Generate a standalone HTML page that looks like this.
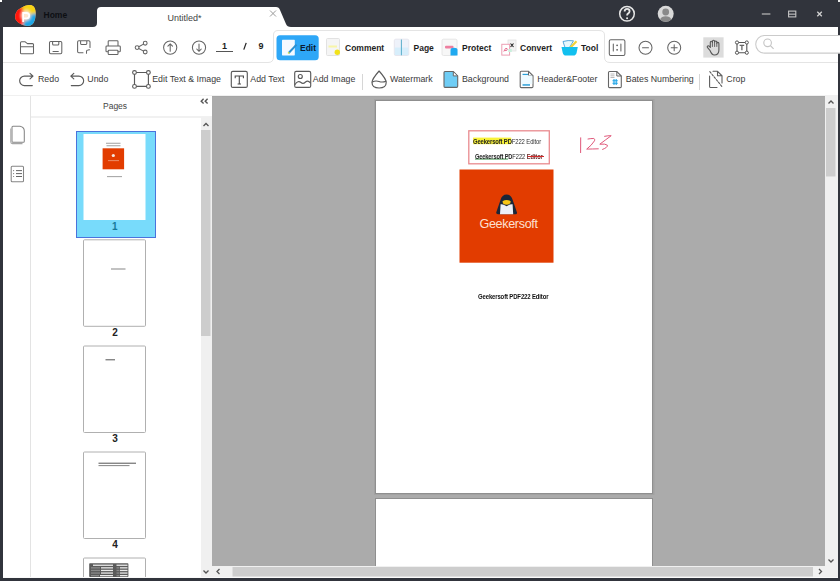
<!DOCTYPE html>
<html><head><meta charset="utf-8">
<style>
*{margin:0;padding:0;box-sizing:border-box}
html,body{width:840px;height:581px;overflow:hidden;background:#31343c;font-family:"Liberation Sans",sans-serif}
.a{position:absolute}
.t{position:absolute;white-space:nowrap;font-size:8.5px;color:#3a3a3a;line-height:10px}
.b{font-weight:bold;color:#1e1e1e}
svg{position:absolute;left:0;top:0}
</style></head><body>
<!-- BACKGROUND SHAPES -->
<svg width="840" height="581">
<rect x="0" y="0" width="840" height="581" fill="#31343c"/>
<rect x="0" y="0" width="2" height="2" fill="#fff"/>
<!-- app white body -->
<rect x="3" y="27" width="835" height="551" fill="#fff"/>
<!-- untitled tab -->
<path d="M93 27 Q97 27 97 23 L97 11 Q97 7 101 7 L276 7 Q279 7 280 10 L286 24 Q287 27 291 27 Z" fill="#fff"/>
<!-- row1 borders -->
<path d="M3 62.5 L268 62.5 Q273.5 62.5 273.5 57 L273.5 35 Q273.5 30.5 278 30.5 L599 30.5 Q604.5 30.5 604.5 35 L604.5 57 Q604.5 62.5 610 62.5 L838 62.5" fill="none" stroke="#e4e4e4" stroke-width="1"/>
<!-- row2 bottom -->
<rect x="3" y="95" width="835" height="1" fill="#f0f0f0"/>
<!-- main gray -->
<rect x="212" y="96" width="613" height="470" fill="#ababab"/>
<rect x="212" y="96" width="613" height="1" fill="#a6a6a6"/>
<!-- left strip separator -->
<rect x="30" y="96" width="1" height="481" fill="#e3e3e3"/>
<!-- pages header line -->
<rect x="31" y="116.5" width="181" height="1" fill="#e3e3e3"/>
<!-- pages scrollbar -->
<rect x="201" y="117.5" width="11" height="460" fill="#f0f0f0"/>
<rect x="201" y="130" width="9.5" height="206" fill="#cdcdcd"/>
<path d="M203.5 126 L206 123.5 L208.5 126" fill="none" stroke="#555" stroke-width="1.3"/>
<path d="M203.5 570.5 L206 573 L208.5 570.5" fill="none" stroke="#555" stroke-width="1.3"/>
<!-- collapse << -->
<path d="M203.6 98.8 L201.2 101.2 L203.6 103.6 M207.6 98.8 L205.2 101.2 L207.6 103.6" fill="none" stroke="#555" stroke-width="1.4"/>
<!-- right v scrollbar -->
<rect x="825" y="96" width="13" height="482" fill="#f0f0f0"/>
<rect x="826" y="108" width="9.5" height="68.5" fill="#cdcdcd"/>
<path d="M828.5 103.5 L831 101 L833.5 103.5" fill="none" stroke="#555" stroke-width="1.3"/>
<path d="M828.5 559.5 L831 562 L833.5 559.5" fill="none" stroke="#555" stroke-width="1.3"/>
<!-- h scrollbar -->
<rect x="212" y="566" width="626" height="11" fill="#f0f0f0"/>
<rect x="232.5" y="567" width="580.5" height="9.5" fill="#cdcdcd"/>
<path d="M219.5 569 L217 571.5 L219.5 574" fill="none" stroke="#555" stroke-width="1.3"/>
<path d="M819 569 L821.5 571.5 L819 574" fill="none" stroke="#555" stroke-width="1.3"/>
<rect x="3" y="577" width="835" height="1" fill="#fafafa"/>
<!-- pages -->
<rect x="374" y="99" width="280.5" height="396" fill="#a2a2a2"/>
<rect x="375" y="100" width="278" height="394" fill="#8f8f8f"/>
<rect x="376" y="101" width="276" height="392" fill="#fff"/>
<rect x="375" y="498" width="278" height="68" fill="#8f8f8f"/>
<rect x="376" y="499" width="276" height="67" fill="#fff"/>
</svg>
<svg width="840" height="581">
<!-- logo -->
<defs>
<radialGradient id="lg" cx="0.45" cy="0.5" r="0.6">
<stop offset="0" stop-color="#ffe9d0"/><stop offset="0.35" stop-color="#ffd9b0"/><stop offset="1" stop-color="#ffd9b0" stop-opacity="0"/>
</radialGradient>
<linearGradient id="lr" x1="0" y1="0" x2="1" y2="0">
<stop offset="0" stop-color="#ff1010"/><stop offset="0.5" stop-color="#ff4030"/><stop offset="1" stop-color="#ff6040" stop-opacity="0"/>
</linearGradient>
</defs>
<clipPath id="lclip"><path d="M15.2 17.5 C15 13 17.5 9.5 21 8 C24.5 5.5 28.5 4.6 31.5 5.2 C34.5 6 35.8 9.5 35.6 14 C35.5 19.5 34 24 30.5 25.6 C27.5 26.6 23 25.5 19.5 23.2 C16.8 21.6 15.3 19.8 15.2 17.5 Z"/></clipPath>
<filter id="lblur" x="-50%" y="-50%" width="200%" height="200%"><feGaussianBlur stdDeviation="1.6"/></filter>
<g clip-path="url(#lclip)">
<rect x="14" y="4" width="23" height="23" fill="#ffb070"/>
<g filter="url(#lblur)">
<path d="M12 4 L26 2 L38 2 L38 15 L27 15 Z" fill="#f6d414"/>
<path d="M27 15 L38 13 L38 28 L22 28 Z" fill="#1aa6e6"/>
<path d="M10 8 L22 6 L24 16 L21 30 L10 30 Z" fill="#ff1208"/>
<ellipse cx="26" cy="15.5" rx="4.5" ry="5" fill="#ffe8d0"/>
</g>
</g>
<path d="M23.2 22 L23.2 13 L26.5 13 Q29.2 13 29.2 15.7 Q29.2 18.4 26.5 18.4 L23.2 18.4" fill="none" stroke="#fff" stroke-width="1.8"/>
<!-- tab close -->
<path d="M270 10.5 L276 16.5 M276 10.5 L270 16.5" stroke="#9a9a9a" stroke-width="1"/>
<!-- help -->
<circle cx="627" cy="13.8" r="7.3" fill="none" stroke="#e6e6e6" stroke-width="1.5"/>
<path d="M624.6 11.6 Q624.6 8.9 627.1 8.9 Q629.6 8.9 629.6 11.3 Q629.6 12.8 628 13.6 Q627.1 14.1 627.1 15.6" fill="none" stroke="#e6e6e6" stroke-width="1.8"/>
<circle cx="627.1" cy="18.2" r="1.05" fill="#e6e6e6"/>
<!-- avatar -->
<circle cx="665.7" cy="13.8" r="8" fill="#d9d9d9"/>
<circle cx="665.7" cy="12" r="3.4" fill="#8a8a8a"/>
<path d="M660 19.5 Q661.5 16.3 665.7 16.3 Q669.9 16.3 671.4 19.5 Q669 21.8 665.7 21.8 Q662.4 21.8 660 19.5 Z" fill="#8a8a8a"/>
<!-- window controls -->
<rect x="761.8" y="13.4" width="8.6" height="1.2" fill="#b9b9b9"/>
<rect x="788.6" y="11.1" width="7.2" height="5.8" fill="none" stroke="#c4c4c4" stroke-width="1.1"/>
<rect x="788.6" y="13.6" width="7.2" height="1.1" fill="#c4c4c4"/>
<path d="M817.3 11.8 L821.8 16.3 M821.8 11.8 L817.3 16.3" stroke="#d0d0d0" stroke-width="1.3"/>
<rect x="838" y="0" width="2" height="2" fill="#e8e8e8"/>

<g fill="none" stroke="#646464" stroke-width="1.05" stroke-linejoin="round" stroke-linecap="round">
<!-- folder -->
<path d="M21.5 41.7 L24.9 41.7 L27.4 43.6 L32.5 43.6 Q33.5 43.6 33.5 44.6 L33.5 52.9 Q33.5 53.8 32.5 53.8 L21.5 53.8 Q20.5 53.8 20.5 52.9 L20.5 42.7 Q20.5 41.7 21.5 41.7 Z M20.5 46.8 L33.5 46.8"/>
<!-- save -->
<rect x="49.5" y="41.5" width="12.3" height="12.3" rx="1.2"/>
<path d="M52.6 41.5 L52.6 44 Q52.6 45 53.6 45 L57.8 45 Q58.8 45 58.8 44 L58.8 41.5 M53 51.5 L58.3 51.5"/>
<!-- save as -->
<path d="M90 47.5 L90 42 Q90 40.8 88.8 40.8 L78.8 40.8 Q77.6 40.8 77.6 42 L77.6 51.6 Q77.6 52.8 78.8 52.8 L83 52.8 M80.6 40.8 L80.6 43.6 Q80.6 44.4 81.4 44.4 L86 44.4 Q86.8 44.4 86.8 43.6 L86.8 40.8 M86.5 53.3 L86.5 51.5 Q86.5 50 88 50 L89.6 49.8"/>
<!-- print -->
<path d="M108.2 45.8 L108.2 41.6 Q108.2 40.8 109 40.8 L117.2 40.8 Q118 40.8 118 41.6 L118 45.8 M108 51.8 L106.8 51.8 Q106 51.8 106 51 L106 46.8 Q106 45.9 106.9 45.9 L119.4 45.9 Q120.3 45.9 120.3 46.8 L120.3 51 Q120.3 51.8 119.4 51.8 L118 51.8"/>
<rect x="108.2" y="50.2" width="9.8" height="4.3" rx="0.8"/>
<!-- share -->
<circle cx="145.2" cy="43.2" r="1.9"/><circle cx="137.1" cy="47.6" r="1.9"/><circle cx="145.2" cy="52" r="1.9"/>
<path d="M138.8 46.7 L143.5 44.1 M138.8 48.5 L143.5 51.1"/>
<!-- up/down -->
<circle cx="170.2" cy="47.6" r="6.6"/>
<path d="M170.2 51.2 L170.2 44 M167.9 46.2 L170.2 43.9 L172.5 46.2"/>
<circle cx="199" cy="47.6" r="6.6"/>
<path d="M199 44 L199 51.2 M196.7 49 L199 51.3 L201.3 49"/>
<!-- right tools -->
<rect x="609.3" y="39.8" width="15.6" height="15.6" rx="1.5"/>
<path d="M613.3 44 L613.3 51 M620.9 44 L620.9 51"/>
<circle cx="645.5" cy="47.8" r="6.5"/>
<path d="M642.5 47.8 L648.5 47.8"/>
<circle cx="674.2" cy="47.8" r="6.5"/>
<path d="M671.2 47.8 L677.2 47.8 M674.2 44.8 L674.2 50.8"/>
</g>
<circle cx="617.1" cy="45.3" r="0.9" fill="#5e5e5e"/><circle cx="617.1" cy="49.8" r="0.9" fill="#5e5e5e"/>
<rect x="703.3" y="37.3" width="20.3" height="20.3" fill="#dcdcdc"/>
<g fill="none" stroke="#555" stroke-width="1.1" stroke-linejoin="round" stroke-linecap="round">
<path d="M710 50.5 L707.6 47.6 Q706.8 46.5 707.8 45.9 Q708.7 45.4 709.5 46.5 L710.3 47.5 L710.3 42.5 Q710.3 41.3 711.4 41.3 Q712.4 41.3 712.4 42.5 L712.4 41.4 Q712.4 40.3 713.5 40.3 Q714.6 40.3 714.6 41.4 L714.6 42 Q714.6 41 715.7 41 Q716.8 41 716.8 42 L716.8 43.3 Q716.8 42.4 717.8 42.4 Q718.9 42.4 718.9 43.5 L718.9 50 Q718.9 55 714.3 55 Q711.8 55 710 50.5 Z"/>
<path d="M712.4 42.5 L712.4 46.5 M714.6 42 L714.6 46.5 M716.8 43.3 L716.8 46.5" stroke-width="0.9"/>
<path d="M737 42.5 L746.8 42.5 M737 52.7 L746.8 52.7 M737 42.5 L737 52.7 M746.8 42.5 L746.8 52.7"/>
</g>
<g fill="#fff" stroke="#555" stroke-width="1"><circle cx="737" cy="42.5" r="1.6"/><circle cx="746.8" cy="42.5" r="1.6"/><circle cx="737" cy="52.7" r="1.6"/><circle cx="746.8" cy="52.7" r="1.6"/></g>
<path d="M739.6 45.3 L744.2 45.3 M741.9 45.3 L741.9 50.3" stroke="#666" stroke-width="1.3"/>
<!-- search -->
<path d="M840 35.5 L764.5 35.5 A8.8 8.8 0 0 0 764.5 53.1 L840 53.1" fill="#fff" stroke="#cbcbcb" stroke-width="1.1"/>
<circle cx="767.6" cy="42.8" r="3.8" fill="none" stroke="#c4c4c4" stroke-width="1.1"/>
<path d="M770.4 45.6 L773.6 48.8" stroke="#c4c4c4" stroke-width="1.2"/>

<!-- Edit button -->
<rect x="276.5" y="35.3" width="42.2" height="25" rx="3.5" fill="#2ea7f7"/>
<rect x="282" y="39.8" width="12.8" height="15.6" rx="0.6" fill="#f4f9ff"/>
<path d="M288.7 53 L296.5 44.6" stroke="#2a8fd0" stroke-width="2"/>
<path d="M288.2 53.6 L289.2 52.3" stroke="#d5e04a" stroke-width="1.6"/>
<!-- Comment icon -->
<rect x="326.5" y="38.5" width="13" height="17" rx="1" fill="#f5f5f5" stroke="#e2e2e2" stroke-width="1"/>
<rect x="328.5" y="45.5" width="8.5" height="2" fill="#f8f5a8"/>
<circle cx="337.3" cy="52.3" r="2.7" fill="#f2e21a"/>
<!-- Page icon -->
<rect x="394.3" y="39.2" width="14.5" height="16.3" rx="1.5" fill="#eef2fa" stroke="#e6e6ee" stroke-width="1"/>
<rect x="394.8" y="47.5" width="13.5" height="7.5" fill="#d7eefb"/>
<path d="M401.4 39.5 L401.4 55.3" stroke="#5aaecb" stroke-width="1"/>
<!-- Protect icon -->
<rect x="442" y="39.2" width="15" height="16.3" rx="1.5" fill="#f7f7f7" stroke="#e6e6e6" stroke-width="1"/>
<rect x="445" y="45.7" width="8.5" height="2.8" rx="1" fill="#ee7fa0"/>
<path d="M450.5 55.5 L450.5 50 Q450.5 47.8 454 47.8 Q457.5 47.8 457.5 50 L457.5 55.5 Z" fill="#1fa9f0"/>
<!-- Convert icon -->
<rect x="508" y="40" width="8" height="11" fill="#f3f3f3" stroke="#e2e2e2" stroke-width="0.8"/>
<path d="M510.5 43.5 L513.5 47 M513.5 43.5 L510.5 47" stroke="#222" stroke-width="1.1"/>
<rect x="501.8" y="44.3" width="7.8" height="10.8" fill="#fff" stroke="#ec9fb3" stroke-width="1"/>
<path d="M503.8 51.5 Q505.5 47 507 48.5 Q508 51 504.5 50.5" fill="none" stroke="#e76d90" stroke-width="1"/>
<rect x="508.3" y="49" width="3.5" height="3" fill="#c9f0dd"/>
<!-- Tool icon -->
<path d="M563 41.5 Q568 40 573.5 40.8 L569.5 47.5 L565 47.5 Z" fill="#e6f8fd" stroke="#4a9fd8" stroke-width="0.9"/>
<path d="M570.5 47.5 L576.5 41.2" stroke="#f0d23a" stroke-width="2.2"/>
<path d="M561.5 47 L577.8 47 L576.6 52.8 Q576 55.6 573.3 55.6 L566 55.6 Q563.3 55.6 562.7 52.8 Z" fill="#12c0ef"/>

<!-- ROW 2 -->
<g fill="none" stroke="#5a5a5a" stroke-width="1.15" stroke-linejoin="round" stroke-linecap="round">
<path d="M32.3 85.6 L24.4 85.6 A4.75 4.75 0 0 1 24.4 76.1 L33 76.1 M30 73.3 L33 76.1 L30 78.9"/>
<path d="M71.3 85.6 L78.9 85.6 A4.75 4.75 0 0 0 78.9 76.1 L70.8 76.1 M73.8 73.3 L70.8 76.1 L73.8 78.9"/>
<path d="M134.5 72.5 L148.4 72.5 M134.5 86.4 L148.4 86.4 M134.5 72.5 L134.5 86.4 M148.4 72.5 L148.4 86.4"/>
<rect x="231.3" y="71.4" width="16" height="16" rx="1.5"/>
<rect x="294.7" y="71.4" width="16" height="16" rx="1.5"/>
<circle cx="300.3" cy="76.5" r="2"/>
<path d="M295 84.5 Q298 80 301 82.5 Q303 84.5 305.5 82 Q308 80 310.5 83"/>
<path d="M379.1 71 Q372 79 372 82.5 Q372 88 379.1 88 Q386.2 88 386.2 82.5 Q386.2 79 379.1 71 Z"/>
<path d="M372.3 82 Q375.5 80.3 379.1 81.5 Q382.5 82.7 386 81.2"/>
</g>
<g fill="#fff" stroke="#5a5a5a" stroke-width="1.1"><circle cx="134.5" cy="72.5" r="1.9"/><circle cx="148.4" cy="72.5" r="1.9"/><circle cx="134.5" cy="86.4" r="1.9"/><circle cx="148.4" cy="86.4" r="1.9"/></g>
<path d="M235.2 78.3 L235.2 76 L243.4 76 L243.4 78.3 M239.3 76 L239.3 84 M237.6 84 L241 84" fill="none" stroke="#4a4a4a" stroke-width="1.1"/>
<!-- background icon -->
<path d="M445 71.5 L453.3 71.5 L457.7 75.9 L457.7 86.3 Q457.7 87.4 456.6 87.4 L445 87.4 Q444 87.4 444 86.3 L444 72.6 Q444 71.5 445 71.5 Z" fill="#6fcdf5" stroke="#666" stroke-width="1.1"/>
<path d="M453.3 71.5 L453.3 75.9 L457.7 75.9 Z" fill="#fff" stroke="#666" stroke-width="1"/>
<!-- header footer -->
<path d="M521.2 71.3 L528.5 71.3 L533 75.8 L533 86.5 Q533 87.6 531.9 87.6 L521.2 87.6 Q520.2 87.6 520.2 86.5 L520.2 72.4 Q520.2 71.3 521.2 71.3 Z" fill="#fff" stroke="#666" stroke-width="1.1"/>
<path d="M528.5 71.3 L528.5 75.8 L533 75.8" fill="none" stroke="#666" stroke-width="1"/>
<rect x="522.5" y="73.8" width="5.5" height="1.3" fill="#2a9fd8"/>
<rect x="522.5" y="84.2" width="7.5" height="1.5" fill="#2a9fd8"/>
<rect x="521" y="75.5" width="11.3" height="8.5" fill="#eefaff"/>
<!-- bates -->
<path d="M609.5 71.5 L616.8 71.5 L621.3 76 L621.3 86.5 Q621.3 87.6 620.2 87.6 L609.5 87.6 Q608.5 87.6 608.5 86.5 L608.5 72.6 Q608.5 71.5 609.5 71.5 Z" fill="#fff" stroke="#666" stroke-width="1.1"/>
<path d="M616.8 71.5 L616.8 76 L621.3 76" fill="none" stroke="#666" stroke-width="1"/>
<path d="M610.5 74 L614.5 74 M610.5 75.8 L614.5 75.8 M610.5 77.5 L614.5 77.5" stroke="#aaa" stroke-width="0.8"/>
<path d="M614 79 L614 85 M616.2 79 L616.2 85 M612.5 80.8 L617.8 80.8 M612.5 83.2 L617.8 83.2" stroke="#1ea4e6" stroke-width="1.1"/>
<!-- separators -->
<rect x="362" y="74" width="1" height="16" fill="#d6d6d6"/>
<rect x="699" y="74" width="1" height="16" fill="#d6d6d6"/>
<!-- crop -->
<g fill="none" stroke="#5e5e5e" stroke-width="1.1" stroke-linecap="round">
<path d="M709.6 76 L709.6 86.4 Q709.6 87.5 710.7 87.5 L717 87.5 M713 71.3 L717.5 71.3 L722 75.8 L722 83 M717.5 71.3 L717.5 75.8 L722 75.8"/>
<path d="M709.8 71.6 L722.5 87.2" stroke-dasharray="2 1.4"/>
</g>
<!-- left strip icons -->
<g fill="none" stroke="#858585" stroke-width="1.05" stroke-linejoin="round">
<path d="M13 126.2 L20 126.2 Q24.3 127 24.3 131 L24.3 141.2 Q24.3 142.3 23.2 142.3 L13 142.3 Q12 142.3 12 141.2 L12 127.3 Q12 126.2 13 126.2 Z"/>
<path d="M10.8 128.5 L10.8 142 Q10.8 143.6 12.4 143.6 L22.5 143.6" stroke="#a5a5a5"/>
<rect x="11.2" y="166.3" width="12.3" height="15.5" rx="1"/>
<path d="M16 170.6 L22 170.6 M16 173.6 L22 173.6 M16 176.5 L22 176.5" stroke-width="1" stroke="#666"/>
</g>
<circle cx="13.6" cy="170.6" r="0.6" fill="#777"/><circle cx="13.6" cy="173.6" r="0.6" fill="#777"/><circle cx="13.6" cy="176.5" r="0.6" fill="#777"/>
</svg>
<svg width="840" height="581">
<!-- thumb 1 selected -->
<rect x="76.5" y="131.5" width="79" height="106" fill="#78dbfb" stroke="#4a73dc" stroke-width="1"/>
<rect x="83.5" y="134" width="62" height="86" fill="#fff"/>
<rect x="106" y="142.8" width="14.5" height="0.8" fill="#888"/>
<rect x="106.5" y="145.4" width="14" height="0.8" fill="#888"/>
<rect x="102.6" y="148.3" width="21.5" height="21" fill="#e23c00"/>
<circle cx="113.3" cy="155.5" r="1.6" fill="#f4e8e0"/>
<rect x="108" y="160.3" width="11" height="0.8" fill="#f0a080"/>
<rect x="107" y="176.3" width="15" height="0.8" fill="#888"/>
<!-- thumb 2 -->
<rect x="83.5" y="239.8" width="62" height="86.5" rx="1" fill="#fff" stroke="#b0b0b0" stroke-width="1"/>
<rect x="111" y="268.6" width="14.5" height="0.8" fill="#666"/>
<!-- thumb 3 -->
<rect x="83.5" y="346" width="62" height="86.5" rx="1" fill="#fff" stroke="#b0b0b0" stroke-width="1"/>
<rect x="105.5" y="359.3" width="9.5" height="1" fill="#555"/>
<!-- thumb 4 -->
<rect x="83.5" y="452" width="62" height="86.5" rx="1" fill="#fff" stroke="#b0b0b0" stroke-width="1"/>
<rect x="98.5" y="462.7" width="37.5" height="1" fill="#555"/>
<rect x="98.5" y="465.2" width="31" height="0.9" fill="#777"/>
<!-- thumb 5 -->
<path d="M83.5 577 L83.5 559 Q83.5 558 84.5 558 L144.5 558 Q145.5 558 145.5 559 L145.5 577" fill="#fff" stroke="#b0b0b0" stroke-width="1"/>
<rect x="89.2" y="563.3" width="39.2" height="13.7" rx="0.8" fill="#5a5a5a"/>
<g fill="#e8e8e8"><rect x="93" y="564.6" width="20" height="1.3"/><rect x="101" y="567.2" width="12" height="1.3"/><rect x="101" y="569.8" width="12" height="1.3"/><rect x="101" y="572.4" width="12" height="1.3"/><rect x="100" y="575" width="13" height="1.3"/>
<rect x="116.5" y="564.6" width="11" height="1.3"/><rect x="120" y="567.2" width="7.5" height="1.3"/><rect x="120" y="569.8" width="7.5" height="1.3"/><rect x="120" y="572.4" width="7.5" height="1.3"/><rect x="120" y="575" width="7.5" height="1.3"/></g>
<g fill="#8a8a8a"><rect x="91" y="567.2" width="9" height="1.3"/><rect x="91" y="569.8" width="9" height="1.3"/><rect x="91" y="572.4" width="9" height="1.3"/><rect x="91" y="575" width="8" height="1.3"/><rect x="116.5" y="567.2" width="3" height="1.3"/><rect x="116.5" y="569.8" width="3" height="1.3"/><rect x="116.5" y="572.4" width="3" height="1.3"/><rect x="116.5" y="575" width="3" height="1.3"/></g>

<!-- page 1 content -->
<rect x="468.8" y="130.8" width="80.5" height="33" fill="none" stroke="#e98b8f" stroke-width="1.3"/>
<rect x="473" y="137.6" width="38.2" height="6.6" fill="#f8f23a"/>
<rect x="475" y="158.6" width="33" height="0.9" fill="#2c8a3c"/>

<rect x="459.5" y="169.5" width="94" height="93.2" fill="#e23c00"/>
<!-- penguin -->
<path d="M506.6 194.5 Q502 194.5 500.5 200 L496.2 212.5 Q496 214.3 498 214.3 L515.3 214.3 Q517.3 214.3 517 212.5 L512.7 200 Q511.2 194.5 506.6 194.5 Z" fill="#1c2638"/>
<path d="M502.5 201.2 Q506.6 199 510.7 201.2 L510.2 203.6 Q506.6 206 503 203.6 Z" fill="#f7c515"/>
<path d="M500 214.3 L500.6 204.3 Q503 203.8 506.6 206.2 Q510.2 203.8 512.6 204.3 L513.2 214.3 Z" fill="#eceff7"/>
<!-- handwriting 123 -->
<g fill="none" stroke="#e0587a" stroke-width="1" stroke-linecap="round" stroke-linejoin="round">
<path d="M580.7 137.8 L580.6 152.6"/>
<path d="M588 139 Q591 138.4 593.8 138.5 Q595.3 139 594.5 140.8 Q591.5 145.5 586.7 149.1 Q592.5 149 598.3 148.8"/>
<path d="M604.6 136.3 Q608 135.6 611.2 135.7 Q606 139.5 599.8 144.2 Q605.5 143.6 607.4 145.2 Q608 147.3 602.6 149.4"/>
</g>
</svg>
<div class="t" style="left:473.4px;top:137px;font-size:6.3px;color:#222;line-height:10px;transform:scaleX(0.935);transform-origin:0 0"><b style="letter-spacing:-0.15px">Geekersoft PD</b><span style="color:#333;letter-spacing:-0.1px">F222 Editor</span></div>
<div class="t" style="left:475px;top:152px;font-size:6.3px;color:#222;line-height:10px;transform:scaleX(0.9);transform-origin:0 0"><b style="letter-spacing:-0.15px">Geekersoft PD</b>F222 <b style="color:#6a2a2a;letter-spacing:-0.1px">Editor</b></div>
<div class="a" style="left:527.5px;top:155.9px;width:16.5px;height:0.9px;background:#d42a2a"></div>
<div class="t" style="left:478px;top:291.5px;font-size:6.3px;color:#111;font-weight:bold;letter-spacing:-0.15px;transform:scaleX(0.95);transform-origin:0 0">Geekersoft PDF222 Editor</div>
<div class="t" style="left:479.5px;top:215.5px;font-size:12.6px;color:#fde0d2;line-height:16px;letter-spacing:-0.35px">Geekersoft</div>
<div class="t b" style="left:112px;top:220.5px;font-size:10px;color:#17799a;line-height:12px">1</div>
<div class="t b" style="left:112.3px;top:326.5px;font-size:10px;color:#222;line-height:12px">2</div>
<div class="t b" style="left:112.3px;top:432.5px;font-size:10px;color:#222;line-height:12px">3</div>
<div class="t b" style="left:112.3px;top:538.5px;font-size:10px;color:#222;line-height:12px">4</div>
<div class="t" style="left:43.5px;top:10px;color:#0d0f13;font-weight:bold">Home</div>
<div class="t" style="left:167.5px;top:12.5px;color:#444;font-size:9px">Untitled*</div>
<div class="t b" style="left:222px;top:40.7px;font-size:9px">1</div>
<svg width="840" height="581"><path d="M243.8 49.6 L246.2 42.9" stroke="#222" stroke-width="1.25"/></svg>
<div class="t b" style="left:258.5px;top:40.9px;font-size:9px">9</div>
<div class="a" style="left:216px;top:51px;width:17px;height:1px;background:#555"></div>
<div class="t b" style="left:300px;top:42.5px;color:#0a1a30">Edit</div>
<div class="t b" style="left:345px;top:42.5px">Comment</div>
<div class="t b" style="left:413.5px;top:42.5px">Page</div>
<div class="t b" style="left:462px;top:42.5px">Protect</div>
<div class="t b" style="left:520px;top:42.5px">Convert</div>
<div class="t b" style="left:581px;top:42.5px">Tool</div>
<div class="t" style="left:38px;top:74px;font-size:8.8px">Redo</div>
<div class="t" style="left:87.3px;top:74px;font-size:8.8px">Undo</div>
<div class="t" style="left:152.2px;top:74px;font-size:8.8px">Edit Text &amp; Image</div>
<div class="t" style="left:250.3px;top:74px;font-size:8.8px">Add Text</div>
<div class="t" style="left:312.8px;top:74px;font-size:8.8px">Add Image</div>
<div class="t" style="left:390px;top:74px;font-size:8.8px">Watermark</div>
<div class="t" style="left:462px;top:74px;font-size:8.8px">Background</div>
<div class="t" style="left:537.3px;top:74px;font-size:8.8px">Header&amp;Footer</div>
<div class="t" style="left:625.8px;top:74px;font-size:8.8px">Bates Numbering</div>
<div class="t" style="left:726.3px;top:74px;font-size:8.8px">Crop</div>
<div class="t" style="left:103px;top:101px;color:#444">Pages</div>
</body></html>
